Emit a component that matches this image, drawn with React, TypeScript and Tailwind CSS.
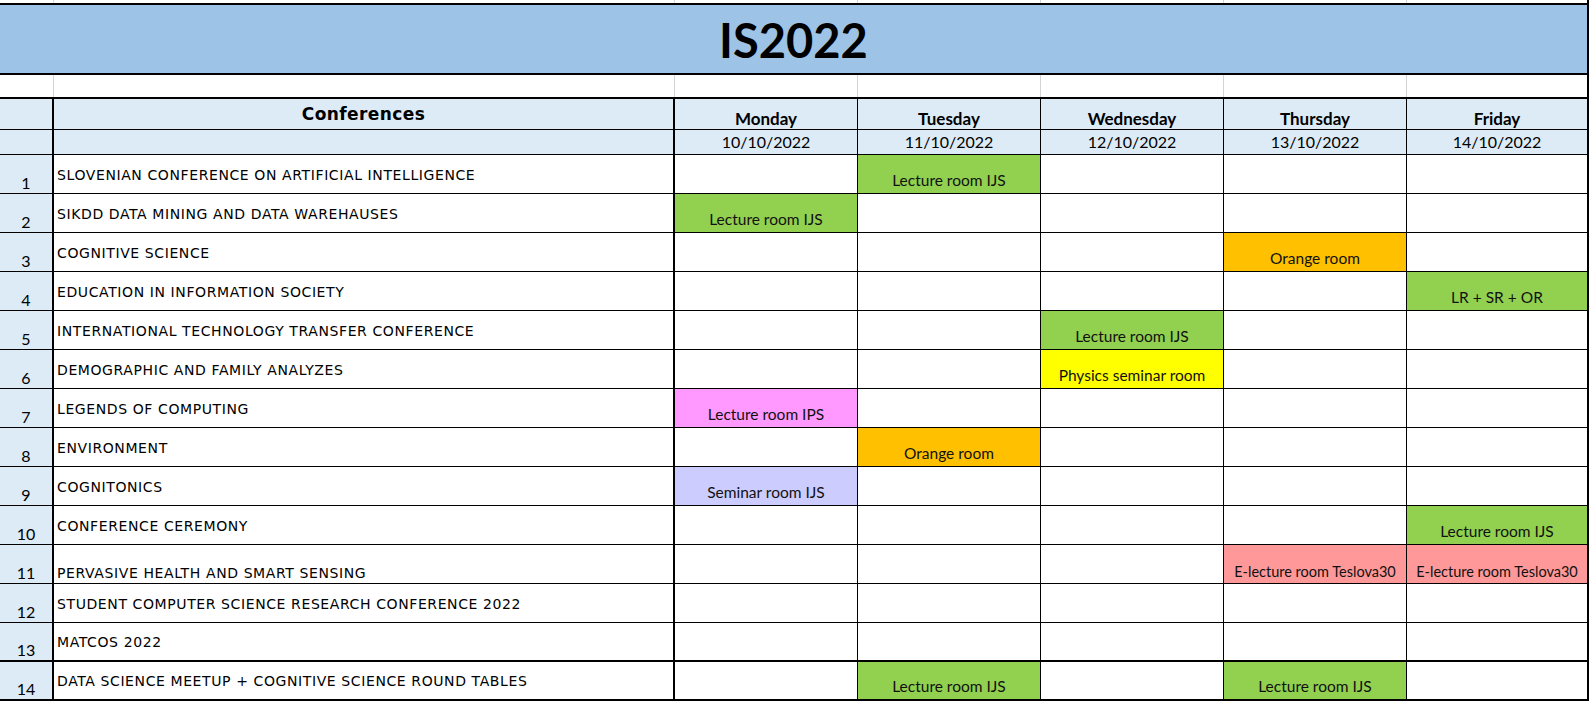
import React from "react";

type Room = { day: number; label: string; color: string; small?: boolean };

interface Conf {
  n: number;
  name: string;
  rooms: Room[];
  bottomName?: boolean;
}

const GREEN = "bg-[#92d050]";
const ORANGE = "bg-[#ffc000]";
const YELLOW = "bg-[#ffff00]";
const PINK = "bg-[#ff99ff]";
const LAVENDER = "bg-[#ccccff]";
const SALMON = "bg-[#ff9999]";

const DAYS = [
  { name: "Monday", date: "10/10/2022" },
  { name: "Tuesday", date: "11/10/2022" },
  { name: "Wednesday", date: "12/10/2022" },
  { name: "Thursday", date: "13/10/2022" },
  { name: "Friday", date: "14/10/2022" },
];

const CONFS: Conf[] = [
  { n: 1, name: "SLOVENIAN CONFERENCE ON ARTIFICIAL INTELLIGENCE", rooms: [{ day: 1, label: "Lecture room IJS", color: GREEN }] },
  { n: 2, name: "SIKDD DATA MINING AND DATA WAREHAUSES", rooms: [{ day: 0, label: "Lecture room IJS", color: GREEN }] },
  { n: 3, name: "COGNITIVE SCIENCE", rooms: [{ day: 3, label: "Orange room", color: ORANGE }] },
  { n: 4, name: "EDUCATION IN INFORMATION SOCIETY", rooms: [{ day: 4, label: "LR + SR + OR", color: GREEN }] },
  { n: 5, name: "INTERNATIONAL TECHNOLOGY TRANSFER CONFERENCE", rooms: [{ day: 2, label: "Lecture room IJS", color: GREEN }] },
  { n: 6, name: "DEMOGRAPHIC AND FAMILY ANALYZES", rooms: [{ day: 2, label: "Physics seminar room", color: YELLOW }] },
  { n: 7, name: "LEGENDS OF COMPUTING", rooms: [{ day: 0, label: "Lecture room IPS", color: PINK }] },
  { n: 8, name: "ENVIRONMENT", rooms: [{ day: 1, label: "Orange room", color: ORANGE }] },
  { n: 9, name: "COGNITONICS", rooms: [{ day: 0, label: "Seminar room IJS", color: LAVENDER }] },
  { n: 10, name: "CONFERENCE CEREMONY", rooms: [{ day: 4, label: "Lecture room IJS", color: GREEN }] },
  {
    n: 11,
    name: "PERVASIVE HEALTH AND SMART SENSING",
    bottomName: true,
    rooms: [
      { day: 3, label: "E-lecture room Teslova30", color: SALMON, small: true },
      { day: 4, label: "E-lecture room Teslova30", color: SALMON, small: true },
    ],
  },
  { n: 12, name: "STUDENT COMPUTER SCIENCE RESEARCH CONFERENCE 2022", rooms: [] },
  { n: 13, name: "MATCOS 2022", rooms: [] },
  {
    n: 14,
    name: "DATA SCIENCE MEETUP + COGNITIVE SCIENCE ROUND TABLES",
    rooms: [
      { day: 1, label: "Lecture room IJS", color: GREEN },
      { day: 3, label: "Lecture room IJS", color: GREEN },
    ],
  },
];

const GRID = "grid grid-cols-[54px_621px_183px_183px_183px_183px_182px]";
const calibri = "font-['Lato','Liberation_Sans',sans-serif]";
const verdana = "font-['DejaVu_Sans','Liberation_Sans',sans-serif]";

// empty spreadsheet band with faint gridlines
function BlankRow({ h }: { h: string }) {
  return (
    <div className={`${GRID} ${h}`}>
      {[0, 1, 2, 3, 4, 5].map((i) => (
        <div key={i} className="border-r border-[#d4d4d4]" />
      ))}
      <div className="border-r-2 border-black" />
    </div>
  );
}

export default function App() {
  return (
    <div className="w-[1590px] h-[701px] overflow-hidden bg-white text-black">
      <BlankRow h="h-[3px]" />

      {/* Title */}
      <div className={`w-[1589px] h-[72px] border-y-2 border-r-2 border-black bg-[#9dc3e6] flex items-center justify-center pt-[3px] ${calibri}`}>
        <span className="text-[47px] font-bold leading-none">IS2022</span>
      </div>

      <BlankRow h="h-[22px]" />

      {/* Table */}
      <div className="border-t-2 border-black w-[1589px]">
        {/* header: day names */}
        <div className={`${GRID} h-[31px]`}>
          <div className="bg-[#ddebf7] border-r-2 border-b border-black" />
          <div className={`bg-[#ddebf7] border-r-2 border-b border-black flex items-center justify-center pt-[1px] ${verdana}`}>
            <span className="text-[17px] font-bold leading-none tracking-[0.4px]">Conferences</span>
          </div>
          {DAYS.map((d, i) => (
            <div
              key={d.name}
              className={`bg-[#ddebf7] border-b border-black flex items-end justify-center pb-[2px] ${calibri} ${i === 4 ? "border-r-2" : "border-r"}`}
            >
              <span className="text-[17px] font-bold leading-none">{d.name}</span>
            </div>
          ))}
        </div>

        {/* header: dates */}
        <div className={`${GRID} h-[25px]`}>
          <div className="bg-[#ddebf7] border-r-2 border-b border-black" />
          <div className="bg-[#ddebf7] border-r-2 border-b border-black" />
          {DAYS.map((d, i) => (
            <div
              key={d.date}
              className={`bg-[#ddebf7] border-b border-black flex items-end justify-center pb-[4px] ${calibri} ${i === 4 ? "border-r-2" : "border-r"}`}
            >
              <span className="text-[16px] leading-none">{d.date}</span>
            </div>
          ))}
        </div>

        {/* conference rows */}
        {CONFS.map((c) => {
          const bottom = c.n === 13 || c.n === 14 ? "border-b-2" : "border-b";
          return (
            <div key={c.n} className={`${GRID} h-[39px]`}>
              <div className={`bg-[#ddebf7] border-r-2 ${bottom} border-black flex items-end justify-center pb-[2px] ${calibri}`}>
                <span className="text-[16px] leading-none">{c.n}</span>
              </div>
              <div
                className={`border-r-2 ${bottom} border-black flex pl-[3px] ${verdana} ${
                  c.bottomName ? "items-end pb-[3px]" : "items-center pt-[1px]"
                }`}
              >
                <span className="text-[14px] leading-none tracking-[0.6px] whitespace-nowrap">{c.name}</span>
              </div>
              {DAYS.map((d, i) => {
                const room = c.rooms.find((r) => r.day === i);
                return (
                  <div
                    key={d.name}
                    className={`${bottom} border-black flex items-end justify-center ${calibri} ${
                      i === 4 ? "border-r-2" : "border-r"
                    } ${room ? room.color : ""} ${room?.small ? "pb-[4px]" : "pb-[5px]"}`}
                  >
                    {room && (
                      <span
                        className={`leading-none whitespace-nowrap text-[#111] ${
                          room.small ? "text-[14.5px]" : "text-[15.5px]"
                        }`}
                      >
                        {room.label}
                      </span>
                    )}
                  </div>
                );
              })}
            </div>
          );
        })}
      </div>
    </div>
  );
}
